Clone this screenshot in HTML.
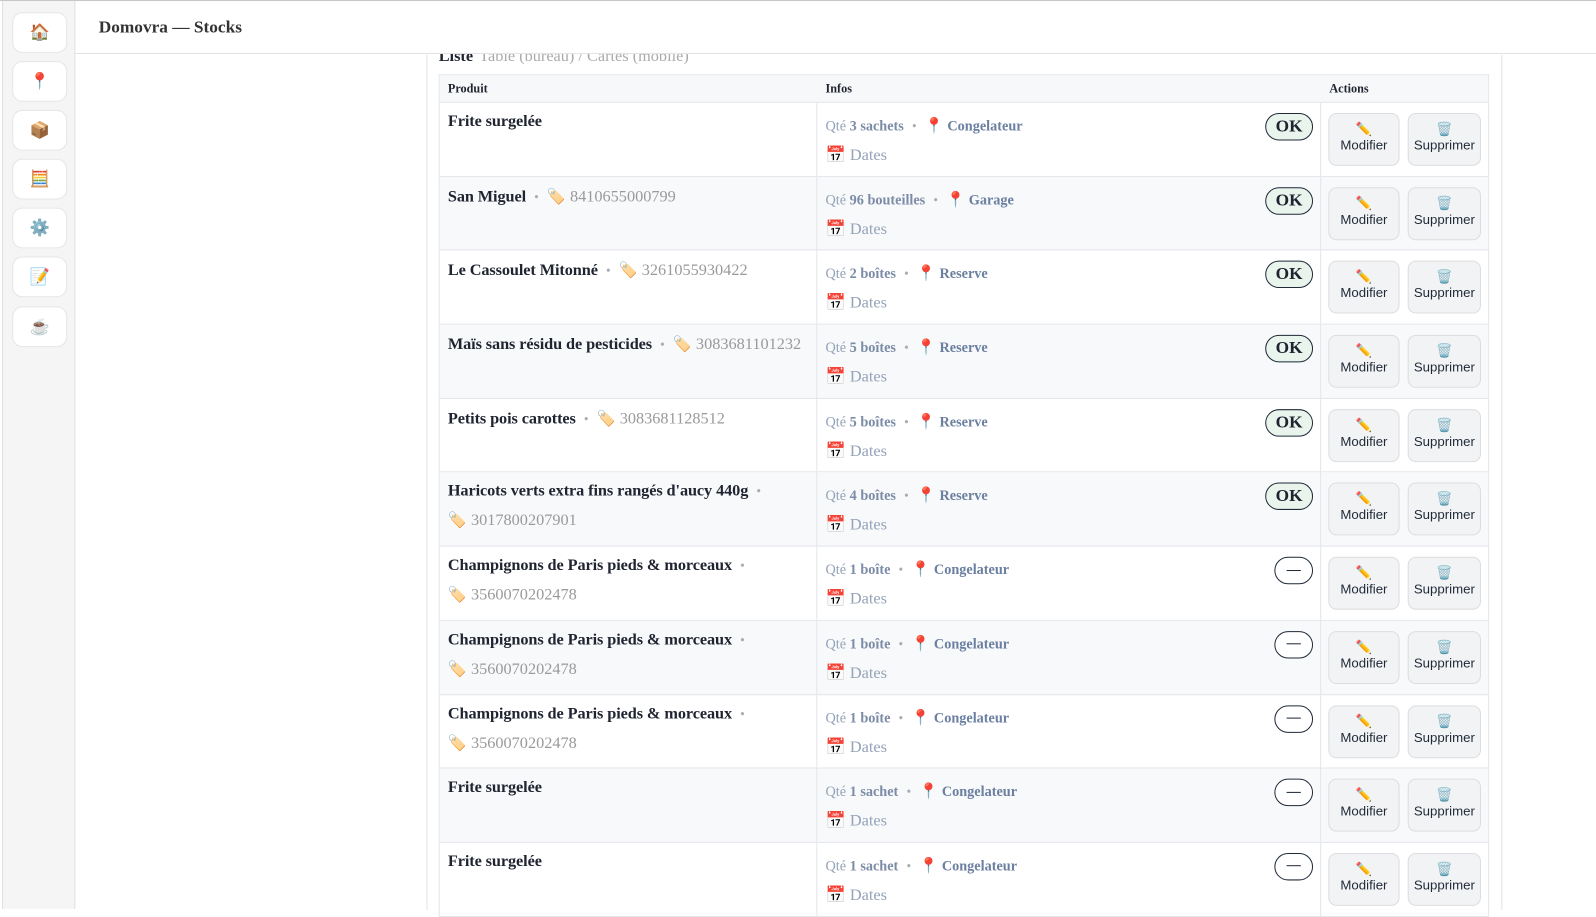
<!DOCTYPE html>
<html><head><meta charset="utf-8"><style>
*{box-sizing:border-box;margin:0;padding:0}
html,body{width:1596px;height:909px;overflow:hidden;background:#fff}
#wrap{position:absolute;left:0;top:0;width:1568px;height:893px;transform:scale(1.01786);transform-origin:0 0;font-family:"Liberation Serif",serif;color:#1f2430}
.topline{position:absolute;left:0;top:0;width:1568px;height:1px;background:#c8c8c8;z-index:5}
.side{position:absolute;left:2px;top:1px;width:72px;height:892px;background:#f5f5f5;border-left:1px solid #e2e2e2;border-right:1px solid #e2e2e2;z-index:4}
.sb{position:absolute;left:9px;width:54px;height:40px;background:#fff;border:1px solid #e6e6e6;border-radius:10px;text-align:center;line-height:38px;font-size:16px;font-family:"Noto Color Emoji","DejaVu Sans",sans-serif}
.hbar{position:absolute;left:74px;top:1px;width:1494px;height:52px;background:#fff;border-bottom:1px solid #e3e3e3;z-index:3}
.hdr{position:absolute;left:97px;top:17px;font-weight:bold;font-size:17px;color:#333;z-index:4}
.vl{position:absolute;top:54px;width:1px;height:840px;background:#e3e3e3}
.liste{position:absolute;left:431px;top:46px;font-size:16px;font-weight:bold;line-height:20px;z-index:1}
.liste span{font-weight:normal;color:#aaa;margin-left:6px}
.tbl{position:absolute;left:431px;top:73px;width:1032px;border:1px solid #e3e5ea;border-bottom:none}
.th{height:27px;background:#f7f8fa;border-bottom:1px solid #e3e5ea;position:relative;font-size:12px;font-weight:bold}
.th div{position:absolute;top:6px}
.row{height:72.7px;border-bottom:1px solid #e3e5ea;position:relative}
.row.alt{background:#f8f9fb}
.c1{position:absolute;left:0;width:371px;top:0;bottom:0;border-right:1px solid #e3e5ea}
.c2{position:absolute;left:371px;width:495px;top:0;bottom:0;border-right:1px solid #e3e5ea}
.nm{position:absolute;left:8px;top:9px;font-size:16px;font-weight:bold;line-height:20px;width:360px;letter-spacing:-0.1px}
.dot{color:#a8adb5;font-weight:normal;margin:0 8px;font-size:13px}
.bc{color:#9a9a9a;font-weight:normal;font-size:16px;letter-spacing:0}
.em{font-family:"Noto Color Emoji","DejaVu Sans",sans-serif;font-size:15px}
.bc2{position:absolute;left:8px;top:38px;font-size:16px;color:#9a9a9a}
.i1{position:absolute;left:8px;top:13px;font-size:14px;color:#94a3b8}
.i1 b{color:#7c8ca6}
.i1 .loc{font-weight:bold;color:#6b7fa0}
.i2{position:absolute;left:8px;top:41px;font-size:16px;color:#94a3b8}
.i2 .em{font-size:16px}
.ok{position:absolute;left:440px;top:10px;width:47px;height:27px;border:1.5px solid #1f2937;border-radius:14px;background:#e8f4ec;font-weight:bold;font-size:17px;text-align:center;line-height:24px}
.nul{position:absolute;left:449px;top:10px;width:38px;height:27px;border:1.5px solid #1f2937;border-radius:14px;background:#fff}
.nul:after{content:"";position:absolute;left:11px;top:11.5px;width:14px;height:1px;background:#1f2937}
.btn{position:absolute;top:10px;height:52px;background:#f2f3f5;border:1px solid #dcdde0;border-radius:8px;font-family:"Liberation Sans",sans-serif;font-size:13px;color:#1f2937;text-align:center;padding-top:9px;line-height:16px;overflow:hidden;white-space:nowrap}
.btn .em{display:block;font-size:13px;line-height:14px}
.b1{left:873px;width:70px}.b2{left:951px;width:72px}
</style></head><body><div id="wrap">
<div class="topline"></div>
<div class="side">
<div class="sb" style="top:11px">🏠</div>
<div class="sb" style="top:59px">📍</div>
<div class="sb" style="top:107px">📦</div>
<div class="sb" style="top:155px">🧮</div>
<div class="sb" style="top:203px">⚙️</div>
<div class="sb" style="top:251px">📝</div>
<div class="sb" style="top:300px">☕</div>
</div>
<div class="hbar"></div>
<div class="hdr">Domovra — Stocks</div>
<div class="vl" style="left:419px"></div>
<div class="vl" style="left:1475px"></div>
<div class="liste">Liste<span>Table (bureau) / Cartes (mobile)</span></div>
<div class="tbl">
<div class="th"><div style="left:8px">Produit</div><div style="left:379px">Infos</div><div style="left:874px">Actions</div></div>
<div class="row"><div class="c1"><div class="nm">Frite surgelée</div></div><div class="c2"><div class="i1">Qté <b>3 sachets</b><span class="dot">•</span><span class="em">📍</span> <span class="loc">Congelateur</span></div><div class="i2"><span class="em">📅</span> Dates</div><div class="ok">OK</div></div><div class="btn b1"><span class="em">✏️</span>Modifier</div><div class="btn b2"><span class="em">🗑️</span>Supprimer</div></div>
<div class="row alt"><div class="c1"><div class="nm">San Miguel<span class="dot">•</span><span class="bc"><span class="em">🏷️</span> 8410655000799</span></div></div><div class="c2"><div class="i1">Qté <b>96 bouteilles</b><span class="dot">•</span><span class="em">📍</span> <span class="loc">Garage</span></div><div class="i2"><span class="em">📅</span> Dates</div><div class="ok">OK</div></div><div class="btn b1"><span class="em">✏️</span>Modifier</div><div class="btn b2"><span class="em">🗑️</span>Supprimer</div></div>
<div class="row"><div class="c1"><div class="nm">Le Cassoulet Mitonné<span class="dot">•</span><span class="bc"><span class="em">🏷️</span> 3261055930422</span></div></div><div class="c2"><div class="i1">Qté <b>2 boîtes</b><span class="dot">•</span><span class="em">📍</span> <span class="loc">Reserve</span></div><div class="i2"><span class="em">📅</span> Dates</div><div class="ok">OK</div></div><div class="btn b1"><span class="em">✏️</span>Modifier</div><div class="btn b2"><span class="em">🗑️</span>Supprimer</div></div>
<div class="row alt"><div class="c1"><div class="nm">Maïs sans résidu de pesticides<span class="dot">•</span><span class="bc"><span class="em">🏷️</span> 3083681101232</span></div></div><div class="c2"><div class="i1">Qté <b>5 boîtes</b><span class="dot">•</span><span class="em">📍</span> <span class="loc">Reserve</span></div><div class="i2"><span class="em">📅</span> Dates</div><div class="ok">OK</div></div><div class="btn b1"><span class="em">✏️</span>Modifier</div><div class="btn b2"><span class="em">🗑️</span>Supprimer</div></div>
<div class="row"><div class="c1"><div class="nm">Petits pois carottes<span class="dot">•</span><span class="bc"><span class="em">🏷️</span> 3083681128512</span></div></div><div class="c2"><div class="i1">Qté <b>5 boîtes</b><span class="dot">•</span><span class="em">📍</span> <span class="loc">Reserve</span></div><div class="i2"><span class="em">📅</span> Dates</div><div class="ok">OK</div></div><div class="btn b1"><span class="em">✏️</span>Modifier</div><div class="btn b2"><span class="em">🗑️</span>Supprimer</div></div>
<div class="row alt"><div class="c1"><div class="nm">Haricots verts extra fins rangés d'aucy 440g<span class="dot">•</span></div><div class="bc2"><span class="em">🏷️</span> 3017800207901</div></div><div class="c2"><div class="i1">Qté <b>4 boîtes</b><span class="dot">•</span><span class="em">📍</span> <span class="loc">Reserve</span></div><div class="i2"><span class="em">📅</span> Dates</div><div class="ok">OK</div></div><div class="btn b1"><span class="em">✏️</span>Modifier</div><div class="btn b2"><span class="em">🗑️</span>Supprimer</div></div>
<div class="row"><div class="c1"><div class="nm">Champignons de Paris pieds &amp; morceaux<span class="dot">•</span></div><div class="bc2"><span class="em">🏷️</span> 3560070202478</div></div><div class="c2"><div class="i1">Qté <b>1 boîte</b><span class="dot">•</span><span class="em">📍</span> <span class="loc">Congelateur</span></div><div class="i2"><span class="em">📅</span> Dates</div><div class="nul"></div></div><div class="btn b1"><span class="em">✏️</span>Modifier</div><div class="btn b2"><span class="em">🗑️</span>Supprimer</div></div>
<div class="row alt"><div class="c1"><div class="nm">Champignons de Paris pieds &amp; morceaux<span class="dot">•</span></div><div class="bc2"><span class="em">🏷️</span> 3560070202478</div></div><div class="c2"><div class="i1">Qté <b>1 boîte</b><span class="dot">•</span><span class="em">📍</span> <span class="loc">Congelateur</span></div><div class="i2"><span class="em">📅</span> Dates</div><div class="nul"></div></div><div class="btn b1"><span class="em">✏️</span>Modifier</div><div class="btn b2"><span class="em">🗑️</span>Supprimer</div></div>
<div class="row"><div class="c1"><div class="nm">Champignons de Paris pieds &amp; morceaux<span class="dot">•</span></div><div class="bc2"><span class="em">🏷️</span> 3560070202478</div></div><div class="c2"><div class="i1">Qté <b>1 boîte</b><span class="dot">•</span><span class="em">📍</span> <span class="loc">Congelateur</span></div><div class="i2"><span class="em">📅</span> Dates</div><div class="nul"></div></div><div class="btn b1"><span class="em">✏️</span>Modifier</div><div class="btn b2"><span class="em">🗑️</span>Supprimer</div></div>
<div class="row alt"><div class="c1"><div class="nm">Frite surgelée</div></div><div class="c2"><div class="i1">Qté <b>1 sachet</b><span class="dot">•</span><span class="em">📍</span> <span class="loc">Congelateur</span></div><div class="i2"><span class="em">📅</span> Dates</div><div class="nul"></div></div><div class="btn b1"><span class="em">✏️</span>Modifier</div><div class="btn b2"><span class="em">🗑️</span>Supprimer</div></div>
<div class="row"><div class="c1"><div class="nm">Frite surgelée</div></div><div class="c2"><div class="i1">Qté <b>1 sachet</b><span class="dot">•</span><span class="em">📍</span> <span class="loc">Congelateur</span></div><div class="i2"><span class="em">📅</span> Dates</div><div class="nul"></div></div><div class="btn b1"><span class="em">✏️</span>Modifier</div><div class="btn b2"><span class="em">🗑️</span>Supprimer</div></div>
</div>
</div></body></html>
